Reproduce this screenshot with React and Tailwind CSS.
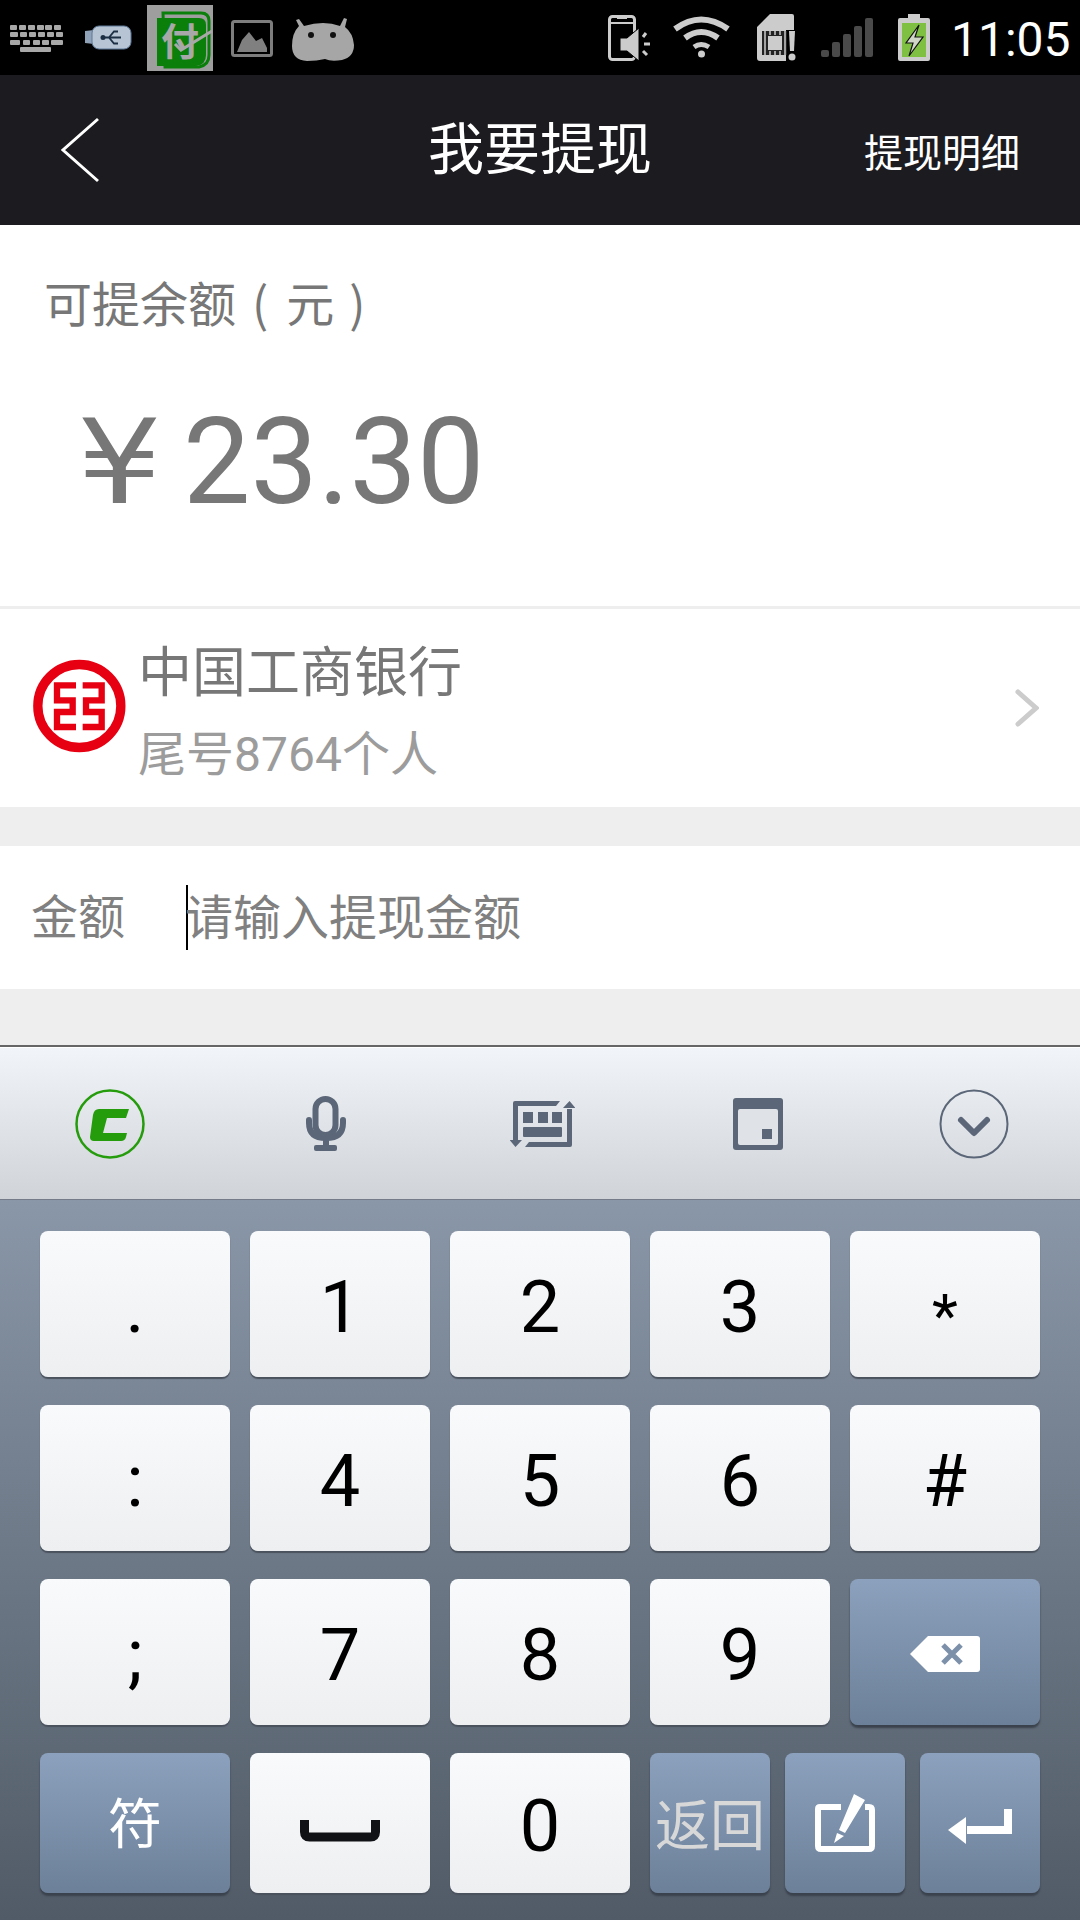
import React from 'react';

const G = '#5b6778';

const Key = ({ children, blue, className = '' }) => (
  <div
    className={`flex items-center justify-center rounded-lg font-[Roboto,'Noto_Sans_CJK_SC',sans-serif] ${
      blue
        ? 'bg-gradient-to-b from-[#8ca1bd] to-[#6c8099] text-white shadow-[0_3px_2px_#3a424d]'
        : 'bg-gradient-to-b from-[#f9fafc] to-[#eeeff1] text-black shadow-[0_2px_1px_#4a525d]'
    } ${className}`}
  >
    {children}
  </div>
);

const Digit = ({ v }) => (
  <Key>
    <span className="text-[72px] leading-none mt-[8px]">{v}</span>
  </Key>
);

const StatusLeft = () => (
  <div className="flex">
    <svg className="ml-[10px]" width="53" height="75" viewBox="0 0 53 75" fill="#a8a8a8">
      {[0, 9, 18, 27, 35, 44].map((x) => <rect key={x} x={x} y="25" width="7" height="5" rx="1" />)}
      {[0, 10, 19, 28, 37, 46].map((x, i) => <rect key={x} x={x} y="32" width={i == 0 ? 8 : 7} height="5" rx="1" />)}
      <rect x="0" y="40" width="10" height="5" rx="1" />
      {[13, 23, 32].map((x) => <rect key={x} x={x} y="40" width="7" height="5" rx="1" />)}
      <rect x="41" y="40" width="12" height="5" rx="1" />
      <rect x="10" y="47" width="31" height="5" rx="1" />
    </svg>
    <svg className="ml-[22px]" width="47" height="75" viewBox="0 0 47 75">
      <path d="M0 31l9-1v14l-9-1z" fill="#8fa2b8" />
      <rect x="7" y="26" width="39" height="23" rx="7" fill="#b6c4d4" stroke="#5d7896" strokeWidth="1" />
      <path d="M18 37.500h18M24 37.500l5-6h4M24 37.500l5 6h4" stroke="#1d2f44" strokeWidth="1.800" fill="none" />
      <circle cx="18" cy="37.500" r="2.500" fill="#1d2f44" />
    </svg>
    <div className="ml-[15px] mt-[5px] w-[66px] h-[66px] bg-[#9e9e9e] relative overflow-hidden">
      <svg width="66" height="66" viewBox="0 0 66 66">
        <path d="M16 8h38q8 0 8 8v34q0 10-10 12H18z" fill="#9e9e9e" stroke="#0a7f0a" strokeWidth="3" />
        <path d="M10 13h42q7 0 7 7v30q0 10-10 11H10z" fill="#0a7f0a" />
      </svg>
      <span className="absolute left-[14px] top-[15px] text-[38px] leading-none font-bold text-[#a8a8a8] font-['Noto_Sans_CJK_SC',sans-serif]">付</span>
      <svg className="absolute left-0 top-0" width="66" height="66" viewBox="0 0 66 66" fill="none" stroke="#a8a8a8" strokeWidth="3">
        <path d="M28 39l6 6 31-19" />
      </svg>
    </div>
    <svg className="ml-[18px]" width="42" height="75" viewBox="0 0 42 75">
      <rect x="1.500" y="21.500" width="39" height="34" rx="2" fill="none" stroke="#7d7d7d" strokeWidth="3" />
      <path d="M6 52l5-12 7-8 7 9 6-3 5 10v4z" fill="#808080" />
    </svg>
    <svg className="ml-[19px]" width="64" height="75" viewBox="0 0 64 75">
      <path d="M7 26l-3-6 3-1 5 7q20-6 36 0l4-8 3 1-2 8q8 6 9 18 0 12-12 15-11 2-17-1-8 2-18 2Q0 60 0 46q0-13 7-20z" fill="#a6a6a6" />
      <circle cx="19" cy="35" r="3" fill="#111" />
      <circle cx="41" cy="35" r="3" fill="#111" />
    </svg>
  </div>
);

const StatusRight = () => (
  <div className="flex">
    <svg width="42" height="75" viewBox="0 0 42 75">
      <rect x="1.500" y="16.500" width="25" height="43" rx="3" fill="none" stroke="#cccccc" strokeWidth="3" />
      <rect x="9" y="17" width="10" height="2" fill="#cccccc" />
      <rect x="2" y="22" width="24" height="2" fill="#cccccc" />
      <path d="M12 38h7l12-10v33l-12-10h-7z" fill="#cccccc" stroke="#000" strokeWidth="1" />
      <path d="M35 37l3-4M36 44h6M35 51l4 4" stroke="#cccccc" strokeWidth="3" />
    </svg>
    <svg className="ml-[23px]" width="57" height="75" viewBox="0 0 57 75" fill="none" stroke="#cccccc" strokeWidth="6">
      <path d="M2 29q26-19 53 0" />
      <path d="M12 38q16-12 33 0" />
      <path d="M21 47q7-5 15 0" strokeWidth="5" />
      <circle cx="28.500" cy="54" r="3.500" fill="#cccccc" stroke="none" />
    </svg>
    <svg className="ml-[27px]" width="40" height="75" viewBox="0 0 40 75">
      <path d="M13 14h22q2 0 2 2v14H29v31H3q-3 0-3-3V27z" fill="#cccccc" />
      <rect x="5" y="31" width="25" height="24" fill="#222" />
      <rect x="11" y="36" width="14" height="14" fill="#cccccc" />
      <path d="M8 31v24M13 31v4M18 31v4M23 31v4M13 51v4M18 51v4M23 51v4M28 31v24" stroke="#cccccc" strokeWidth="1.500" />
      <path d="M32 31h6l-1 20h-4z" fill="#cccccc" />
      <circle cx="35" cy="57" r="3.500" fill="#cccccc" />
    </svg>
    <svg className="ml-[24px]" width="52" height="75" viewBox="0 0 52 75" fill="#4a4a4a">
      <rect x="0" y="50" width="8" height="7" rx="2" />
      <rect x="11" y="42" width="8" height="15" rx="2" />
      <rect x="22" y="34" width="8" height="23" rx="2" />
      <rect x="33" y="26" width="8" height="31" rx="2" />
      <rect x="44" y="18" width="8" height="39" rx="2" />
    </svg>
    <svg className="ml-[25px]" width="32" height="75" viewBox="0 0 32 75">
      <path d="M10 14h12v4h8q2 0 2 2v39q0 2-2 2H2q-2 0-2-2V20q0-2 2-2h8z" fill="#cccccc" />
      <rect x="4" y="23" width="24" height="34" fill="#7fc043" />
      <path d="M21 25L8 43h7l-4 13 14-19h-8z" fill="#cfd6c6" stroke="#111" strokeWidth="1.200" />
    </svg>
    <span className="ml-[21px] mr-[10px] w-[119px] text-[48px] leading-[79px] text-white font-[Roboto,sans-serif]">11:05</span>
  </div>
);

export default function App() {
  return (
    <div className="w-[1080px] h-[1920px] overflow-hidden bg-[#eeeeee] font-['Noto_Sans_CJK_SC',sans-serif]">
      {/* status bar */}
      <div className="h-[75px] bg-black flex justify-between">
        <StatusLeft />
        <StatusRight />
      </div>

      {/* header */}
      <div className="h-[150px] bg-[#1b1b20] flex items-center justify-between relative">
        <svg className="ml-[60px]" width="40" height="66" viewBox="0 0 40 66" fill="none" stroke="#fff" strokeWidth="3">
          <path d="M38 2L3 33l35 31" />
        </svg>
        <span className="absolute left-0 right-0 pb-[10px] text-center text-[56px] leading-none text-white">我要提现</span>
        <span className="mr-[60px] text-[39px] leading-none text-white">提现明细</span>
      </div>

      {/* balance */}
      <div className="h-[384px] bg-white border-b-[3px] border-[#eeeeee] text-[#777777]">
        <div className="pl-[44px] pt-[46px] text-[48px] leading-[60px]">
          可提余额<span className="ml-[16px]">(</span><span className="ml-[18px]">元</span><span className="ml-[15px]">)</span>
        </div>
        <div className="pl-[77px] pt-[61px] flex items-baseline text-[120px] leading-[140px] font-[Roboto,sans-serif]">
          <span className="w-[106px] inline-block origin-left scale-x-[1.13] text-[118px] font-['DejaVu_Sans',sans-serif]">¥</span>
          <span>23.30</span>
        </div>
      </div>

      {/* bank */}
      <div className="h-[198px] bg-white flex items-center">
        <svg className="ml-[25px] mb-[6px]" width="110" height="110" viewBox="0 0 330 330">
          <circle cx="163" cy="168" r="124.500" fill="none" stroke="#e60012" strokeWidth="28" />
          <g fill="none" stroke="#e60012" strokeWidth="19">
            <path d="M153 106H96V151H143V186H96V231H153" />
            <path d="M173 106H230V151H183V186H230V231H173" />
          </g>
        </svg>
        <div className="ml-[3px] mt-[6px] flex flex-col">
          <span className="text-[54px] leading-[64px] text-[#777777]">中国工商银行</span>
          <span className="mt-[24px] text-[48px] leading-[60px] text-[#9c9c9c] font-[Roboto,'Noto_Sans_CJK_SC',sans-serif]">尾号8764个人</span>
        </div>
        <svg className="ml-auto mr-[41px]" width="24" height="38" viewBox="0 0 24 38" fill="none" stroke="#cccccc" strokeWidth="5" strokeLinecap="round">
          <path d="M3 3l18 16L3 35" />
        </svg>
      </div>

      {/* amount */}
      <div className="mt-[39px] h-[143px] bg-white flex items-center text-[48px] leading-none text-[#808080]">
        <span className="ml-[31px] w-[155px] mb-[8px] text-[47px]">金额</span>
        <div className="w-[2px] h-[65px] bg-black"></div>
        <span className="-ml-[3px] mb-[8px]">请输入提现金额</span>
      </div>

      {/* keyboard */}
      <div className="mt-[56px] h-[3px] bg-[#666666] border-b border-white"></div>
      <div className="h-[152px] bg-gradient-to-b from-[#f1f4f8] to-[#d0d3d8] border-b-[1px] border-[#757b88] grid grid-cols-[repeat(5,216px)] items-center pl-[2px] overflow-hidden">
        <div className="flex justify-center">
          <svg width="70" height="70" viewBox="0 0 70 70">
            <circle cx="35" cy="35" r="33.500" fill="none" stroke="#259c0c" strokeWidth="2.500" />
            <path d="M24 20H54L51 29H32L28 44H52L51 48Q50 52 46 52H19Q15 52 15 48L18 26Q19 20 24 20z" fill="#259c0c" />
          </svg>
        </div>
        <div className="flex justify-center">
          <svg width="42" height="56" viewBox="0 0 42 56" fill="none" stroke={G}>
            <rect x="10.500" y="3" width="20" height="36" rx="10" strokeWidth="6" />
            <path d="M4 24v3q0 15 17 15t17-15v-3" strokeWidth="6" strokeLinecap="round" />
            <path d="M21 42v9" strokeWidth="6" />
            <rect x="9" y="49" width="23" height="6" rx="2" fill={G} stroke="none" />
          </svg>
        </div>
        <div className="flex justify-center">
          <svg width="65" height="46" viewBox="0 0 65 46" fill={G}>
            <path d="M5 0h45l-4 5H8v36H3V2q0-2 2-2zM57 8h5v36q0 2-2 2H15l4-5h38z" />
            <path d="M59.500 0l6 7H53zM5.500 46l-6-7H12z" />
            <rect x="13" y="11" width="10" height="11" />
            <rect x="28" y="11" width="10" height="11" />
            <rect x="42" y="11" width="10" height="11" />
            <rect x="13" y="26" width="39" height="10" rx="1" />
          </svg>
        </div>
        <div className="flex justify-center">
          <svg width="50" height="52" viewBox="0 0 50 52">
            <rect x="0" y="0" width="50" height="52" rx="3" fill={G} />
            <rect x="5" y="11" width="40" height="36" rx="2" fill="#dfe2e7" />
            <rect x="29" y="31" width="10" height="10" fill={G} />
          </svg>
        </div>
        <div className="flex justify-center">
          <svg width="70" height="70" viewBox="0 0 70 70" fill="none" stroke={G}>
            <circle cx="35" cy="35" r="33.500" strokeWidth="2" />
            <path d="M22 31l13 13 13-13" strokeWidth="6" strokeLinecap="round" strokeLinejoin="round" />
          </svg>
        </div>
      </div>

      <div className="h-[720px] bg-gradient-to-b from-[#8a97a8] to-[#515b67] px-10 pt-[31px] grid grid-cols-[190px_180px_180px_180px_190px] grid-rows-[146px_146px_146px_140px] gap-x-5 gap-y-7">
        <Digit v="." /><Digit v="1" /><Digit v="2" /><Digit v="3" />
        <Key><span className="text-[60px] leading-none mt-[24px]">*</span></Key>
        <Digit v=":" /><Digit v="4" /><Digit v="5" /><Digit v="6" /><Digit v="#" />
        <Digit v=";" /><Digit v="7" /><Digit v="8" /><Digit v="9" />
        <Key blue>
          <svg className="mt-[4px]" width="70" height="36" viewBox="0 0 70 36">
            <path d="M18 0h49q3 0 3 3v30q0 3-3 3H18L0 18z" fill="#fff" />
            <path d="M33 9l18 18M51 9L33 27" stroke="#7c90aa" strokeWidth="5" />
          </svg>
        </Key>

        <Key blue><span className="text-[54px] leading-none mt-[5px]">符</span></Key>
        <Key>
          <svg className="mt-[16px]" width="80" height="22" viewBox="0 0 80 22" fill="none" stroke="#111215" strokeWidth="9">
            <path d="M4.500 0v12q0 5 5 5h61q5 0 5-5V0" />
          </svg>
        </Key>
        <Digit v="0" />
        <div className="col-span-2 flex gap-[15px]">
          <Key blue className="w-[120px]">
            <span className="text-[55px] leading-none mt-[7px] text-[#d8d8d8] whitespace-nowrap">返回</span>
          </Key>
          <Key blue className="w-[120px]">
            <svg width="60" height="58" viewBox="0 0 60 58">
              <path d="M26 13H5q-2 0-2 2v37q0 3 3 3h48q3 0 3-3V16q0-3-3-3h-4" fill="none" stroke="#fff" strokeWidth="6" />
              <path d="M39 0l11 6-20 33-6-3zM22 39l7 3-10 7z" fill="#fff" />
            </svg>
          </Key>
          <Key blue className="w-[120px]">
            <svg className="mt-[8px]" width="64" height="36" viewBox="0 0 64 36" fill="#fff">
              <path d="M56 0h8v25H19v-8h37z" />
              <path d="M18 8v27L0 21z" />
            </svg>
          </Key>
        </div>
      </div>
    </div>
  );
}
